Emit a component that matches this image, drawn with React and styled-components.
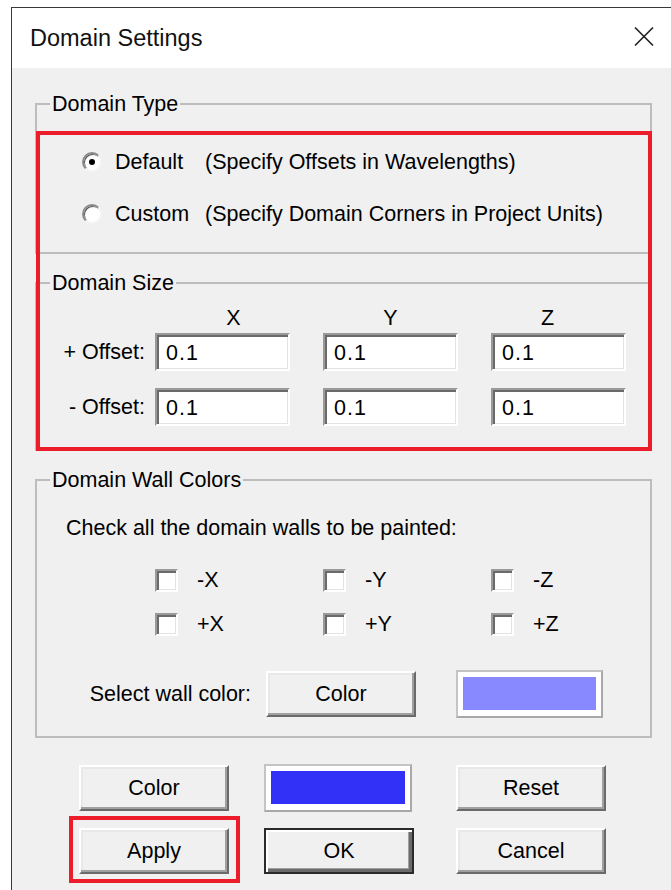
import React from "react";
import styled, { createGlobalStyle, css } from "styled-components";

const GlobalStyle = createGlobalStyle`
  html, body {
    margin: 0;
    padding: 0;
    background: #ffffff;
    overflow: hidden;
  }
  body {
    font-family: "Liberation Sans", Arial, sans-serif;
    color: #000;
  }
`;

const Window = styled.div`
  position: relative;
  box-sizing: border-box;
  margin: 7px 0 0 11px;
  height: 883px;
  border-top: 1px solid #3a3a3a;
  border-left: 1px solid #2f3f33;
  background: #f0f0f0;
  display: flex;
  flex-direction: column;
  font-size: 21.5px;
`;

const TitleBar = styled.div`
  flex: none;
  height: 60px;
  background: #ffffff;
  display: flex;
  align-items: center;
  justify-content: space-between;
  padding: 0 17px 0 18px;
`;

const Title = styled.span`
  font-size: 23.5px;
  color: #111;
`;

const CloseButton = styled.button`
  border: 0;
  background: none;
  padding: 0;
  width: 20px;
  height: 21px;
  display: flex;
  margin-top: -4px;
`;

const Body = styled.div`
  flex: 1;
  padding-left: 23px;
`;

const Group = styled.fieldset`
  box-sizing: border-box;
  width: 617px;
  min-width: 0;
  margin: ${(p) => p.$top}px 0 0;
  padding: ${(p) => p.$pad};
  border: 2px solid #bdbdbd;
`;

const Caption = styled.legend`
  margin-left: 13px;
  padding: 0 2px;
  line-height: 24px;
  font-size: 21.5px;
`;

const RadioRow = styled.label`
  display: flex;
  align-items: center;
  height: 28px;
  padding-left: 45px;
  margin-top: ${(p) => p.$gap || 0}px;
`;

const Radio = styled.input.attrs({ type: "radio" })`
  appearance: none;
  box-sizing: border-box;
  margin: 0 13px 0 0;
  width: 20px;
  height: 20px;
  border-radius: 50%;
  border: 2px solid;
  border-color: #8a8a8a #f4f4f4 #f4f4f4 #8a8a8a;
  background: #ffffff;
  box-shadow: inset 1px 1px 0 #5a5a5a;
  display: grid;
  place-items: center;
  &:checked::after {
    content: "";
    width: 6px;
    height: 6px;
    border-radius: 50%;
    background: #000;
  }
`;

const RadioName = styled.span`
  width: 90px;
`;

const HeaderRow = styled.div`
  display: grid;
  grid-template-columns: repeat(3, 157px);
  padding-left: 118px;
  height: 24px;
  line-height: 24px;
  margin-top: 11px;
`;

const AxisLabel = styled.span`
  text-align: center;
`;

const OffsetGrid = styled.div`
  display: grid;
  grid-template-columns: 118px 168px 168px 135px;
  grid-auto-rows: 38px;
  row-gap: 17px;
  align-items: center;
  margin-top: 3px;
`;

const OffsetLabel = styled.span`
  justify-self: end;
  padding-right: 10px;
`;

const sunken = css`
  box-sizing: border-box;
  background: #ffffff;
  border: 2px solid;
  border-color: #9a9a9a #ffffff #ffffff #9a9a9a;
  box-shadow: inset 2px 2px 0 #6a6a6a, inset -1px -1px 0 #e3e3e3;
`;

const NumberField = styled.input`
  ${sunken};
  width: 135px;
  height: 38px;
  padding: 2px 0 0 9px;
  font: inherit;
  font-size: 21.5px;
  letter-spacing: 1px;
  color: #000;
  outline: none;
`;

const Instruction = styled.div`
  line-height: 24px;
  padding-left: 29px;
  margin-top: 24px;
`;

const CheckGrid = styled.div`
  display: grid;
  grid-template-columns: 168px 168px 135px;
  grid-auto-rows: 24px;
  row-gap: 20px;
  padding-left: 118px;
  margin-top: 28px;
`;

const CheckItem = styled.label`
  display: flex;
  align-items: center;
  gap: 19px;
`;

const CheckBox = styled.input.attrs({ type: "checkbox" })`
  appearance: none;
  ${sunken};
  margin: 0;
  width: 23px;
  height: 23px;
`;

const WallColorRow = styled.div`
  display: grid;
  grid-template-columns: 229px 190px 147px;
  align-items: center;
  height: 48px;
  margin-top: 34px;
`;

const RowLabel = styled.span`
  justify-self: end;
  padding-right: 15px;
`;

const Button = styled.button`
  box-sizing: border-box;
  width: 150px;
  height: 46px;
  padding: 0;
  font: inherit;
  font-size: 21.5px;
  color: #000;
  background: #f0f0f0;
  border: 2px solid;
  border-color: #ffffff #6a6a6a #6a6a6a #ffffff;
  box-shadow: inset -2px -2px 0 #a0a0a0, inset 2px 2px 0 #e8e8e8;
  ${(p) =>
    p.$primary &&
    css`
      border-color: #2a2a2a;
      box-shadow: inset 2px 2px 0 #ffffff, inset -3px -3px 0 #6a6a6a,
        inset -4px -4px 0 #a0a0a0;
    `}
`;

const Swatch = styled.div`
  box-sizing: border-box;
  width: ${(p) => p.$w}px;
  height: 48px;
  padding: 5px 5px 6px;
  background: #ffffff;
  border: 2px solid;
  border-color: #c4c4c4 #a8a8a8 #a8a8a8 #c4c4c4;
  &::after {
    content: "";
    display: block;
    height: 100%;
    background: ${(p) => p.$color};
  }
`;

const ButtonGrid = styled.div`
  display: grid;
  grid-template-columns: 185px 192px 150px;
  grid-auto-rows: 48px;
  row-gap: 15px;
  align-items: center;
  margin: 26px 0 0 44px;
`;

const Highlight = styled.div`
  position: absolute;
  box-sizing: border-box;
  left: ${(p) => p.$x}px;
  top: ${(p) => p.$y}px;
  width: ${(p) => p.$w}px;
  height: ${(p) => p.$h}px;
  border: 4px solid #ec1c2a;
  pointer-events: none;
`;

const axes = ["X", "Y", "Z"];
const offsets = [
  { label: "+ Offset:", values: ["0.1", "0.1", "0.1"] },
  { label: "- Offset:", values: ["0.1", "0.1", "0.1"] },
];
const walls = ["-X", "-Y", "-Z", "+X", "+Y", "+Z"];

function CloseIcon() {
  return (
    <svg width="20" height="21" viewBox="0 0 20 21" fill="none">
      <path d="M1 1.5 L19 19.5 M19 1.5 L1 19.5" stroke="#1e1e1e" strokeWidth="1.6" />
    </svg>
  );
}

export default function App() {
  return (
    <>
      <GlobalStyle />
      <Window>
        <TitleBar>
          <Title>Domain Settings</Title>
          <CloseButton aria-label="Close">
            <CloseIcon />
          </CloseButton>
        </TitleBar>

        <Body>
          <Group $top={24} $pad="32px 0 24px">
            <Caption>Domain Type</Caption>
            <RadioRow>
              <Radio name="domain-type" defaultChecked />
              <RadioName>Default</RadioName>
              <span>(Specify Offsets in Wavelengths)</span>
            </RadioRow>
            <RadioRow $gap={24}>
              <Radio name="domain-type" />
              <RadioName>Custom</RadioName>
              <span>(Specify Domain Corners in Project Units)</span>
            </RadioRow>
          </Group>

          <Group $top={17} $pad="0 0 23px">
            <Caption>Domain Size</Caption>
            <HeaderRow>
              {axes.map((a) => (
                <AxisLabel key={a}>{a}</AxisLabel>
              ))}
            </HeaderRow>
            <OffsetGrid>
              {offsets.map((row) => (
                <React.Fragment key={row.label}>
                  <OffsetLabel>{row.label}</OffsetLabel>
                  {row.values.map((v, i) => (
                    <NumberField key={i} defaultValue={v} />
                  ))}
                </React.Fragment>
              ))}
            </OffsetGrid>
          </Group>

          <Group $top={17} $pad="0 0 18px">
            <Caption>Domain Wall Colors</Caption>
            <Instruction>Check all the domain walls to be painted:</Instruction>
            <CheckGrid>
              {walls.map((w) => (
                <CheckItem key={w}>
                  <CheckBox />
                  <span>{w}</span>
                </CheckItem>
              ))}
            </CheckGrid>
            <WallColorRow>
              <RowLabel>Select wall color:</RowLabel>
              <Button>Color</Button>
              <Swatch $w={147} $color="#8888ff" />
            </WallColorRow>
          </Group>

          <ButtonGrid>
            <Button>Color</Button>
            <Swatch $w={148} $color="#3131f7" />
            <Button>Reset</Button>
            <Button>Apply</Button>
            <Button $primary>OK</Button>
            <Button>Cancel</Button>
          </ButtonGrid>
        </Body>

        <Highlight $x={24} $y={123} $w={616} $h={320} />
        <Highlight $x={57} $y={808} $w={171} $h={67} />
      </Window>
    </>
  );
}
